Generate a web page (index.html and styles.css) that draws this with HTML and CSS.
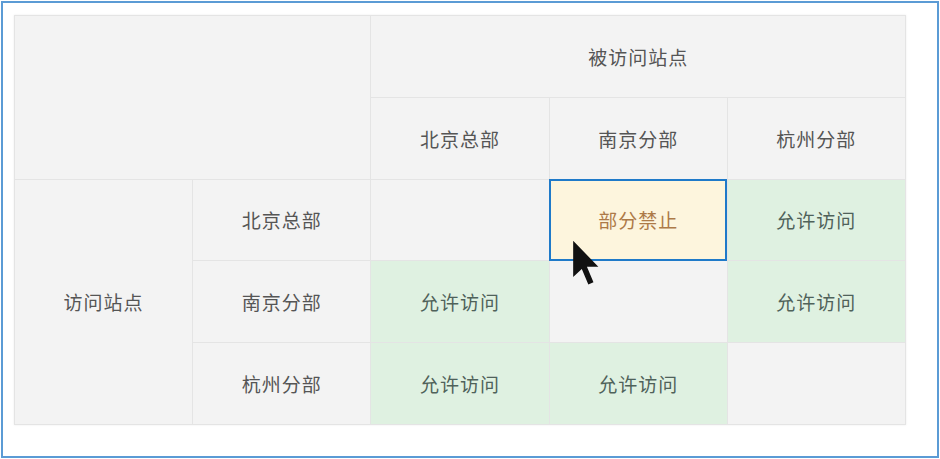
FILE: index.html
```html
<!DOCTYPE html>
<html lang="zh-CN">
<head>
  <meta charset="UTF-8">
  <title>站点访问策略</title>
  <link rel="stylesheet" href="styles.css">
</head>
<body>
  <div class="frame">
    <div class="matrix-wrap">
      <table class="matrix">
        <tr>
          <td class="corner" colspan="2" rowspan="2"></td>
          <td colspan="3">被访问站点</td>
        </tr>
        <tr>
          <td>北京总部</td>
          <td>南京分部</td>
          <td>杭州分部</td>
        </tr>
        <tr>
          <td rowspan="3">访问站点</td>
          <td>北京总部</td>
          <td></td>
          <td class="partial">部分禁止</td>
          <td class="allow">允许访问</td>
        </tr>
        <tr>
          <td>南京分部</td>
          <td class="allow">允许访问</td>
          <td></td>
          <td class="allow">允许访问</td>
        </tr>
        <tr>
          <td>杭州分部</td>
          <td class="allow">允许访问</td>
          <td class="allow">允许访问</td>
          <td></td>
        </tr>
      </table>

      <!-- mouse pointer over the selected cell -->
      <svg class="cursor" width="28" height="48" viewBox="0 0 12 20">
        <path d="M0.5 0.5 L0.5 16 L4.2 12.6 L7 19.2 L9.2 18.2 L6.4 11.6 L11.3 11.6 Z" fill="#111"/>
      </svg>
    </div>
  </div>
</body>
</html>
```
FILE: styles.css
```css
body {
  margin: 0;
  background: #fff;
  font-family: "Noto Sans CJK SC", "Noto Sans", sans-serif;
}
.frame {
  margin: 1px;
  width: 923px;
  height: 441px;
  border: 2px solid #5b9bd5;
  padding: 12px 0 0 11px;
}
.matrix-wrap {
  position: relative;
  width: 892px;
}
.matrix {
  width: 892px;
  height: 410px;
  border-collapse: collapse;
  table-layout: fixed;
  background: #f3f3f3;
  box-shadow: 0 0 2px rgba(0, 0, 0, 0.08);
}
.matrix td {
  border: 1px solid #e4e4e4;
  text-align: center;
  vertical-align: middle;
  font-size: 19px;
  letter-spacing: 1px;
  color: #555;
  height: 80px;
  padding: 0;
}
.matrix td.allow {
  background: #dff1e1;
  color: #4f625a;
}
.matrix td.partial {
  background: #fdf5dd;
  color: #ad7a48;
  outline: 2px solid #1f7ac9;
  outline-offset: -2px;
}
.cursor {
  position: absolute;
  left: 558px;
  top: 224px;
}
```
